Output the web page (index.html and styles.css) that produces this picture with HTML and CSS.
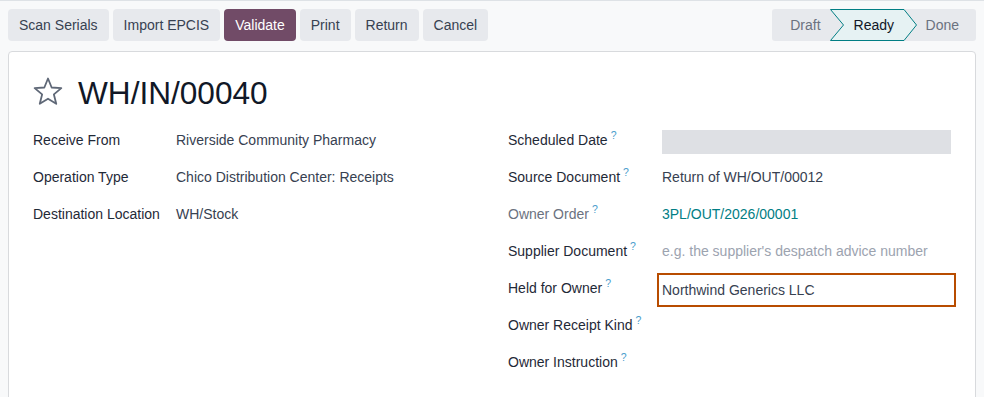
FILE: index.html
```html
<!DOCTYPE html>
<html lang="en">
<head>
  <meta charset="UTF-8">
  <meta name="viewport" content="width=device-width, initial-scale=1.0">
  <title>WH/IN/00040</title>
  <link rel="stylesheet" href="styles.css">
</head>
<body>
  <div class="control-panel">
    <div class="actions">
      <button class="btn">Scan Serials</button>
      <button class="btn">Import EPCIS</button>
      <button class="btn btn-primary">Validate</button>
      <button class="btn">Print</button>
      <button class="btn">Return</button>
      <button class="btn">Cancel</button>
    </div>

    <div class="statusbar">
      <span class="stage stage-draft">Draft</span>
      <span class="stage stage-current">
        <svg class="arrow" viewBox="0 0 87 32" preserveAspectRatio="none">
          <polygon points="0.5,0.5 74,0.5 86.5,16 74,31.5 0.5,31.5 13.5,16" fill="#e6f2f3" stroke="#017e84" stroke-width="1"/>
        </svg>
        <span class="stage-label">Ready</span>
      </span>
      <span class="stage stage-done">Done</span>
    </div>
  </div>

  <div class="sheet">
    <div class="title">
      <svg class="star" width="30" height="28" viewBox="0 0 30 28">
        <polygon points="15,1.5 18.65,10.48 28.31,11.17 20.9,17.42 23.23,26.83 15,21.7 6.77,26.83 9.1,17.42 1.69,11.17 11.35,10.48" fill="none" stroke="#5f6877" stroke-width="1.8" stroke-linejoin="round"/>
      </svg>
      <h1>WH/IN/00040</h1>
    </div>

    <div class="groups">
      <div class="group group-left">
        <div class="row">
          <div class="label">Receive From</div>
          <div class="value">Riverside Community Pharmacy</div>
        </div>
        <div class="row">
          <div class="label">Operation Type</div>
          <div class="value">Chico Distribution Center: Receipts</div>
        </div>
        <div class="row">
          <div class="label">Destination Location</div>
          <div class="value">WH/Stock</div>
        </div>
      </div>

      <div class="group group-right">
        <div class="row">
          <div class="label">Scheduled Date<sup>?</sup></div>
          <div class="value"><div class="placeholder-bar"></div></div>
        </div>
        <div class="row">
          <div class="label">Source Document<sup>?</sup></div>
          <div class="value">Return of WH/OUT/00012</div>
        </div>
        <div class="row">
          <div class="label label-muted">Owner Order<sup>?</sup></div>
          <div class="value"><a class="link">3PL/OUT/2026/00001</a></div>
        </div>
        <div class="row">
          <div class="label">Supplier Document<sup>?</sup></div>
          <div class="value value-placeholder">e.g. the supplier's despatch advice number</div>
        </div>
        <div class="row">
          <div class="label">Held for Owner<sup>?</sup></div>
          <div class="value"><div class="highlight">Northwind Generics LLC</div></div>
        </div>
        <div class="row">
          <div class="label">Owner Receipt Kind<sup>?</sup></div>
          <div class="value"></div>
        </div>
        <div class="row">
          <div class="label">Owner Instruction<sup>?</sup></div>
          <div class="value"></div>
        </div>
      </div>
    </div>
  </div>
</body>
</html>
```

FILE: styles.css
```css
body {
  font-family: 'Liberation Sans', Arial, sans-serif;
  font-size: 14px;
  margin: 0;
  padding: 8px;
  background: #f8f9fa;
  border-top: 1px solid #dee2e6;
  color: #374151;
}

.control-panel {
  display: flex;
  justify-content: space-between;
  align-items: center;
}

.actions {
  display: flex;
  gap: 4px;
}

.btn {
  font-family: inherit;
  font-size: 14px;
  height: 32px;
  padding: 0 11px;
  border: none;
  border-radius: 4px;
  background-color: #e7e9ed;
  color: #374151;
  cursor: pointer;
}

.btn-primary {
  background-color: #714b67;
  color: #ffffff;
}

/* Status bar with chevron stages */
.statusbar {
  display: flex;
  height: 32px;
  background-color: #e7e9ed;
  border-radius: 3px;
}

.stage {
  line-height: 32px;
  color: #6b7280;
}

.stage-draft {
  padding: 0 9px 0 18px;
}

.stage-current {
  position: relative;
  width: 87px;
  padding-left: 24px;
  box-sizing: border-box;
  color: #111827;
}

.stage-current .arrow {
  position: absolute;
  left: 0;
  top: 0;
  width: 87px;
  height: 32px;
}

.stage-label {
  position: relative;
}

.stage-done {
  padding: 0 17px 0 9px;
}

/* Form sheet */
.sheet {
  margin-top: 10px;
  background: #ffffff;
  border: 1px solid #d8dadd;
  border-radius: 4px;
  padding: 22px 24px 40px;
}

.title {
  display: flex;
  align-items: flex-start;
  gap: 15px;
}

.star {
  margin-top: 3px;
}

.title h1 {
  margin: 0;
  font-size: 31.6px;
  font-weight: 400;
  line-height: 38px;
  color: #111827;
}

.groups {
  display: grid;
  grid-template-columns: 475px 1fr;
  margin-top: 10px;
}

.row {
  display: grid;
  height: 37px;
  line-height: 37px;
}

.group-left .row {
  grid-template-columns: 143px 1fr;
}

.group-right .row {
  grid-template-columns: 154px 1fr;
}

.label {
  color: #1f2937;
  white-space: nowrap;
}

.label-muted {
  color: #6b7280;
}

.label sup {
  font-size: 10.5px;
  line-height: 0;
  vertical-align: 6px;
  margin-left: 3px;
  color: #4a9dcc;
}

.value {
  white-space: nowrap;
}

.value-placeholder {
  color: #9ca3af;
}

.link {
  color: #017e84;
  text-decoration: none;
}

.placeholder-bar {
  height: 24px;
  margin-top: 8px;
  background-color: #dee0e4;
}

.highlight {
  height: 24px;
  line-height: 24px;
  margin-top: 8px;
  outline: 2px solid #b84c00;
  outline-offset: 3px;
}
```
